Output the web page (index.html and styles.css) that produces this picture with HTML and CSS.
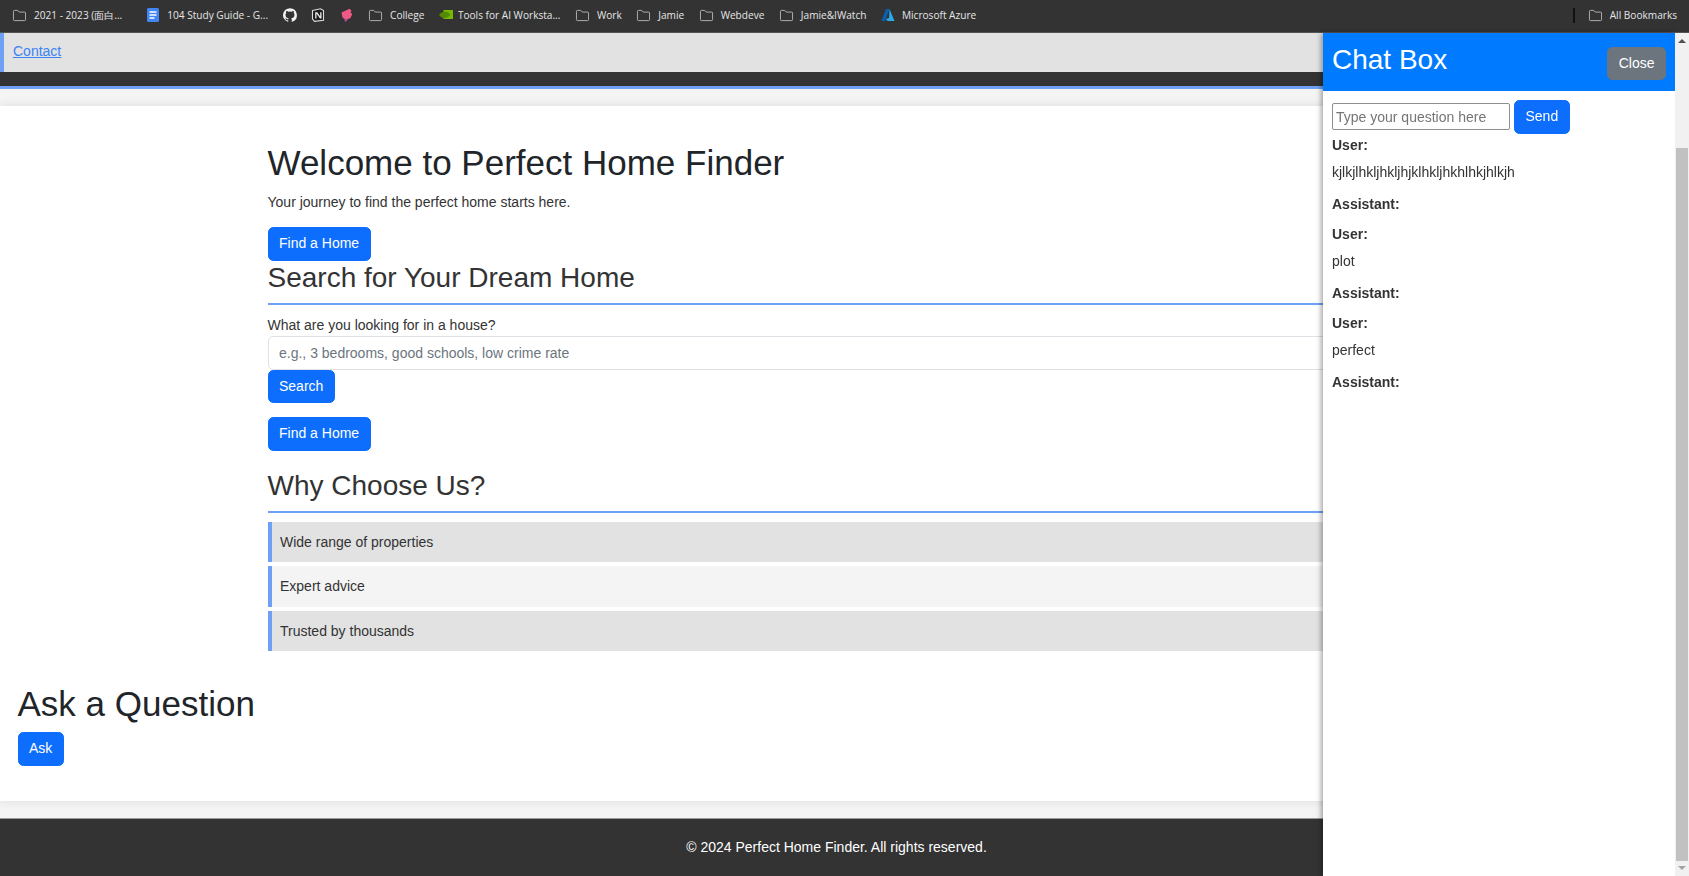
FILE: index.html
```html
<!DOCTYPE html>
<html lang="en">
<head>
  <meta charset="UTF-8">
  <title>Perfect Home Finder</title>
  <link rel="stylesheet" href="styles.css">
</head>
<body>

  <div class="bookmarks">
    <span class="mark first"><svg class="folder" viewBox="0 0 16 14"><path d="M1.500 2.500a1 1 0 0 1 1-1h3.600l1.600 1.800h5.800a1 1 0 0 1 1 1v7.200a1 1 0 0 1-1 1H2.500a1 1 0 0 1-1-1z"/></svg>2021 - 2023 (面白...</span>
    <span class="mark"><svg class="icon" viewBox="0 0 14 14"><rect x="1" width="12" height="14" rx="1.500" fill="#4285f4"/><path d="M3.500 4h7M3.500 7h7M3.500 10h5" stroke="#fff" stroke-width="1.300"/></svg>104 Study Guide - G...</span>
    <span class="mark"><svg class="icon" viewBox="0 0 16 16"><path fill="#f2f2f2" d="M8 .2a8 8 0 0 0-2.500 15.600c.4.1.5-.2.5-.4v-1.400c-2.200.5-2.700-1-2.700-1-.4-.9-.9-1.200-.9-1.200-.7-.5.1-.5.1-.5.8.1 1.200.8 1.200.8.7 1.200 1.900.9 2.300.7.1-.5.3-.9.5-1.100-1.800-.2-3.600-.9-3.600-4 0-.9.3-1.600.8-2.100-.1-.2-.4-1 .1-2.100 0 0 .7-.2 2.200.8a7.600 7.600 0 0 1 4 0c1.500-1 2.200-.8 2.200-.8.4 1.100.2 1.900.1 2.100.5.6.8 1.300.8 2.100 0 3.100-1.900 3.700-3.700 3.900.3.3.6.8.6 1.500v2.200c0 .2.1.5.6.4A8 8 0 0 0 8 .2z"/></svg></span>
    <span class="mark"><svg class="icon" viewBox="0 0 14 14"><path d="M1.500 2.500L9.500.8l3 1.700v9.800l-9 1-2-2.500z" fill="#1c1c1c" stroke="#ddd" stroke-width="1.100"/><path d="M4.200 4.200h2l3 4.300V4.200h1.300v6.300H9L5.500 5.600v4.900H4.200z" fill="#eee"/></svg></span>
    <span class="mark"><svg class="icon" viewBox="0 0 14 14"><path d="M1.500 4.500L9.500.8l2 2-1 1.700 1.800 1.500-1.800 4-4.500 2-3.500-2.500z" fill="#ee5a86"/><path d="M4.500 10.500l3 1.500-1.500 2-1.500-1z" fill="#a8479c"/></svg></span>
    <span class="mark"><svg class="folder" viewBox="0 0 16 14"><path d="M1.500 2.500a1 1 0 0 1 1-1h3.600l1.600 1.800h5.800a1 1 0 0 1 1 1v7.200a1 1 0 0 1-1 1H2.500a1 1 0 0 1-1-1z"/></svg>College</span>
    <span class="mark narrow"><svg class="icon" viewBox="0 0 14 10"><path d="M4.500 1.500v7.500H14V0H4.500z" fill="#76b900"/><path d="M0 5c1.500-2.500 4-3.500 7-3.300C10 2 11 4 11 5c-1 2-3 3-6 3C3 8 1 6.500 0 5z" fill="#558a00"/></svg>Tools for AI Worksta...</span>
    <span class="mark"><svg class="folder" viewBox="0 0 16 14"><path d="M1.500 2.500a1 1 0 0 1 1-1h3.600l1.600 1.800h5.800a1 1 0 0 1 1 1v7.200a1 1 0 0 1-1 1H2.500a1 1 0 0 1-1-1z"/></svg>Work</span>
    <span class="mark"><svg class="folder" viewBox="0 0 16 14"><path d="M1.500 2.500a1 1 0 0 1 1-1h3.600l1.600 1.800h5.800a1 1 0 0 1 1 1v7.200a1 1 0 0 1-1 1H2.500a1 1 0 0 1-1-1z"/></svg>Jamie</span>
    <span class="mark"><svg class="folder" viewBox="0 0 16 14"><path d="M1.500 2.500a1 1 0 0 1 1-1h3.600l1.600 1.800h5.800a1 1 0 0 1 1 1v7.200a1 1 0 0 1-1 1H2.500a1 1 0 0 1-1-1z"/></svg>Webdeve</span>
    <span class="mark"><svg class="folder" viewBox="0 0 16 14"><path d="M1.500 2.500a1 1 0 0 1 1-1h3.600l1.600 1.800h5.800a1 1 0 0 1 1 1v7.200a1 1 0 0 1-1 1H2.500a1 1 0 0 1-1-1z"/></svg>Jamie&amp;IWatch</span>
    <span class="mark"><svg class="icon" viewBox="0 0 14 14"><path d="M5 1h3.500L4 13H.5z" fill="#0a5fb4"/><path d="M8.500 1l5 12H6.500L5 11l3-1z" fill="#2aa8e8"/></svg>Microsoft Azure</span>
    <span class="divider"></span>
    <span class="mark all-marks"><svg class="folder" viewBox="0 0 16 14"><path d="M1.500 2.500a1 1 0 0 1 1-1h3.600l1.600 1.800h5.800a1 1 0 0 1 1 1v7.200a1 1 0 0 1-1 1H2.500a1 1 0 0 1-1-1z"/></svg>All Bookmarks</span>
  </div>

  <div class="page">
    <nav class="topnav"><a href="#">Contact</a></nav>
    <div class="nav-dark"></div>

    <main class="content">
      <div class="container">
        <h1>Welcome to Perfect Home Finder</h1>
        <p class="lead">Your journey to find the perfect home starts here.</p>
        <button class="btn">Find a Home</button>

        <h2>Search for Your Dream Home</h2>
        <label class="field-label">What are you looking for in a house?</label>
        <input class="search-input" type="text" placeholder="e.g., 3 bedrooms, good schools, low crime rate">
        <button class="btn btn-spaced">Search</button>
        <button class="btn">Find a Home</button>

        <h2 class="why">Why Choose Us?</h2>
        <ul class="reasons">
          <li>Wide range of properties</li>
          <li>Expert advice</li>
          <li>Trusted by thousands</li>
        </ul>
      </div>

      <section class="ask">
        <h1>Ask a Question</h1>
        <button class="btn">Ask</button>
      </section>
    </main>

    <footer class="footer">© 2024 Perfect Home Finder. All rights reserved.</footer>
  </div>

  <aside class="chat">
    <div class="chat-head">
      <span class="chat-title">Chat Box</span>
      <button class="btn btn-close">Close</button>
    </div>
    <div class="chat-body">
      <div class="chat-form">
        <input class="chat-input" type="text" placeholder="Type your question here">
        <button class="btn">Send</button>
      </div>
      <p class="who user">User:</p>
      <p class="said">kjlkjlhkljhkljhjklhkljhkhlhkjhlkjh</p>
      <p class="who">Assistant:</p>
      <p class="who user">User:</p>
      <p class="said">plot</p>
      <p class="who">Assistant:</p>
      <p class="who user">User:</p>
      <p class="said">perfect</p>
      <p class="who">Assistant:</p>
    </div>
  </aside>

  <div class="scrollbar">
    <span class="arrow up"></span>
    <span class="thumb"></span>
    <span class="arrow down"></span>
  </div>

</body>
</html>
```

FILE: styles.css
```css
* {
  box-sizing: border-box;
}

html, body {
  height: 100%;
  overflow: hidden;
}

body {
  margin: 0;
  font-family: "Liberation Sans", Arial, sans-serif;
  font-size: 14px;
  line-height: 21px;
  color: #333;
  background: #f4f4f4;
}

/* bookmark bar */
.bookmarks {
  display: flex;
  align-items: center;
  height: 33px;
  padding: 0 12px 2px;
  background: #333;
  border-bottom: 1px solid #555;
  font-family: "Open Sans", sans-serif;
  font-size: 10.1px;
  color: #e6e6e6;
  white-space: nowrap;
}

.mark {
  display: flex;
  align-items: center;
  gap: 7px;
  margin-right: 14.5px;
}

.mark.first {
  margin-right: 24px;
}

.mark.narrow {
  gap: 5px;
}

.folder {
  width: 15px;
  height: 13px;
  fill: none;
  stroke: #b5b5b5;
  stroke-width: 1;
}

.icon {
  width: 14px;
  height: 14px;
}

.divider {
  width: 2px;
  height: 15px;
  margin-left: auto;
  margin-right: 13px;
  background: #111;
}

.all-marks {
  margin-right: 0;
}

/* page */
.page {
  display: flex;
  flex-direction: column;
  height: 843px;
}

.topnav {
  height: 39px;
  padding: 8px 9px;
  background: #e2e2e2;
  border-left: 4px solid #6ea0f5;
}

.topnav a {
  color: #3b82f6;
}

.nav-dark {
  height: 17px;
  background: #333;
  border-bottom: 3px solid #6ea0f5;
}

.content {
  margin-top: 17px;
  height: 695px;
  background: #fff;
  box-shadow: 0 0 10px rgba(0, 0, 0, .1);
}

.container {
  margin-left: 267.5px;
  padding-top: 36px;
}

h1 {
  margin: 0;
  font-size: 35px;
  font-weight: 400;
  line-height: 42px;
  color: #212529;
}

h2 {
  margin: 0 0 10px;
  padding-bottom: 9px;
  font-size: 28px;
  font-weight: 400;
  line-height: 33.6px;
  color: #333;
  border-bottom: 2px solid #6ea0f5;
}

.lead {
  margin: 8px 0 14px;
}

.btn {
  display: block;
  height: 33.5px;
  padding: 5px 10.5px;
  font-family: inherit;
  font-size: 14px;
  line-height: 21px;
  color: #fff;
  background: #0d6efd;
  border: 1px solid #0d6efd;
  border-radius: 5.25px;
}

.btn-spaced {
  margin-bottom: 14px;
}

.field-label {
  display: block;
}

.search-input {
  display: block;
  width: 100%;
  height: 33.5px;
  padding: 5px 10.5px;
  font-family: inherit;
  font-size: 14px;
  border: 1px solid #dee2e6;
  border-radius: 5.25px;
}

.search-input::placeholder {
  color: #6c757d;
}

.why {
  margin-top: 18.5px;
  margin-bottom: 9px;
  padding-bottom: 8px;
}

.reasons {
  margin: 0;
  padding: 0;
  list-style: none;
}

.reasons li {
  height: 40.5px;
  margin-bottom: 4px;
  padding: 10px 8.5px;
  background: #f4f4f4;
  border-left: 4.5px solid #6ea0f5;
}

.reasons li:nth-child(odd) {
  background: #e2e2e2;
}

.ask {
  padding: 28px 17.5px 0;
}

.ask .btn {
  margin-top: 7px;
}

.footer {
  flex: 1;
  margin-top: 17px;
  padding-top: 18px;
  padding-right: 16px;
  text-align: center;
  color: #fff;
  background: #333;
  border-top: 1px solid #999;
}

/* chat panel lies over the page */
.chat {
  position: fixed;
  top: 33px;
  right: 14px;
  bottom: 0;
  width: 352px;
  background: #fff;
  box-shadow: -2px 0 5px rgba(0, 0, 0, .35);
}

.chat-head {
  display: flex;
  align-items: center;
  justify-content: space-between;
  height: 58px;
  padding: 0 9px;
  background: #007bff;
}

.chat-title {
  margin-bottom: 4px;
  font-size: 28px;
  line-height: 34px;
  color: #fff;
}

.btn-close {
  margin-top: 3px;
  background: #6c757d;
  border-color: #6c757d;
}

.chat-body {
  padding: 9px;
}

.chat-form {
  display: flex;
  align-items: center;
  gap: 4px;
  margin-bottom: 1px;
}

.chat-input {
  width: 178px;
  height: 27px;
  padding: 1px 3px;
  font-family: inherit;
  font-size: 14px;
  border: 1px solid #8f8f8f;
  border-radius: 2px;
}

.chat-input::placeholder {
  color: #757575;
}

.who {
  margin: 0 0 9px;
  font-weight: 700;
}

.who.user {
  margin-bottom: 6.3px;
}

.said {
  margin: 0 0 11px;
}

/* window scrollbar */
.scrollbar {
  position: fixed;
  top: 33px;
  right: 0;
  bottom: 0;
  display: flex;
  flex-direction: column;
  align-items: center;
  width: 14px;
  background: #f1f1f1;
}

.thumb {
  width: 12px;
  height: 713px;
  margin-top: 115px;
  background: #c1c1c1;
}

.arrow {
  position: absolute;
  width: 0;
  height: 0;
  border-left: 4px solid transparent;
  border-right: 4px solid transparent;
}

.arrow.up {
  top: 6px;
  border-bottom: 4px solid #505050;
}

.arrow.down {
  bottom: 6px;
  border-top: 4px solid #a3a3a3;
}
```
